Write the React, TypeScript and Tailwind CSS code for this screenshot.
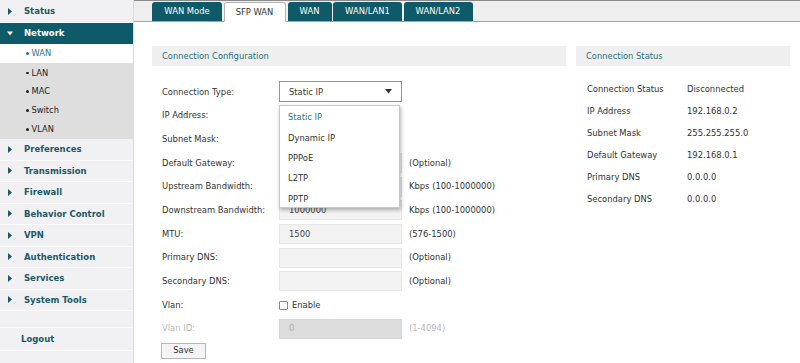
import React from 'react';

const font = { fontFamily: '"DejaVu Sans", Verdana, sans-serif' };

const menu = ['Preferences', 'Transmission', 'Firewall', 'Behavior Control', 'VPN', 'Authentication', 'Services', 'System Tools'];
const subs = ['LAN', 'MAC', 'Switch', 'VLAN'];
const tabs = ['WAN Mode', 'SFP WAN', 'WAN', 'WAN/LAN1', 'WAN/LAN2'];

const Arrow = ({ down = false }: { down?: boolean }) => (
  <svg width="6" height="7" viewBox="0 0 6 7" className="mr-[11px] ml-[7px]">
    {down ? <path d="M0 1.5h6L3 5.5z" fill="currentColor" /> : <path d="M1 0l4 3.5L1 7z" fill="currentColor" />}
  </svg>
);

const MenuItem = ({ label }: { label: string }) => (
  <div className="h-[21.5px] flex items-center border-b border-[#fbfbfc] text-[#1b5866] font-bold text-[8.5px]">
    <Arrow />
    {label}
  </div>
);

const Sidebar = () => (
  <div className="w-[134px] shrink-0 bg-[#f1f1f3] border-r border-[#dcdcdc] flex flex-col">
    <div className="h-[23px] flex items-center border-b border-[#fbfbfc] text-[#1b5866] font-bold text-[8.5px]">
      <Arrow />
      Status
    </div>
    <div className="h-[21px] flex items-center bg-[#0f5a69] text-white font-bold text-[8.5px]">
      <Arrow down />
      Network
    </div>
    <div className="h-[19px] flex items-center bg-white text-[#2a7585] text-[8.3px] pl-[26px]">
      <span className="w-[2.5px] h-[2.5px] rounded-full bg-[#2a7585] mr-[3px]" />
      WAN
    </div>
    <div className="bg-[#dedede] py-[0.5px]">
      {subs.map((s) => (
        <div key={s} className="h-[18.8px] flex items-center text-[#222] text-[8.3px] pl-[26px]">
          <span className="w-[2.5px] h-[2.5px] rounded-full bg-[#222] mr-[3px]" />
          {s}
        </div>
      ))}
    </div>
    {menu.map((m) => (
      <MenuItem key={m} label={m} />
    ))}
    <div className="h-[17px] border-b border-[#fbfbfc]" />
    <div className="h-[23px] flex items-center pl-[21px] border-b border-[#fbfbfc] text-[#1b5866] font-bold text-[8.5px]">
      Logout
    </div>
  </div>
);

const Row = ({ label, children, unit, dim = false }: { label: string; children?: React.ReactNode; unit?: string; dim?: boolean }) => (
  <div className="h-[23.7px] flex items-center">
    <div className={`w-[127px] shrink-0 pl-[10px] ${dim ? 'text-[#b8b8b8]' : 'text-[#333]'}`}>{label}</div>
    <div className="w-[123px] shrink-0">{children}</div>
    {unit && <div className={`ml-[7px] ${dim ? 'text-[#b8b8b8]' : 'text-[#333]'}`}>{unit}</div>}
  </div>
);

const Field = ({ value = '', dark = false }: { value?: string; dark?: boolean }) => (
  <div
    className={`h-[20px] flex items-center pl-[9px] border ${
      dark ? 'bg-[#dcdcdc] border-[#d6d6d6] text-[#b0b0b0]' : 'bg-[#f3f3f3] border-[#e6e6e6] text-[#444]'
    }`}
  >
    {value}
  </div>
);

const options = ['Static IP', 'Dynamic IP', 'PPPoE', 'L2TP', 'PPTP'];

export default function App() {
  return (
    <div className="w-[800px] h-[363px] flex overflow-hidden bg-white text-[8.4px]" style={font}>
      <Sidebar />
      <div className="flex-1 flex flex-col">
        <div className="h-[22px] bg-[#efefef] border-t-[1.5px] border-t-[#8a8a8a] border-b border-b-[#a3a3a3] flex items-end pl-[18px]">
          {tabs.map((t) =>
            t === 'SFP WAN' ? (
              <div
                key={t}
                className="h-[20px] w-[62px] mr-[2px] -mb-[1px] flex items-center justify-center bg-white border border-[#b5b5b5] border-b-white rounded-t-[3px] text-[#333]"
              >
                {t}
              </div>
            ) : (
              <div
                key={t}
                className={`h-[19px] ${t === 'WAN' ? 'w-[44px]' : t === 'WAN Mode' ? 'w-[70px]' : 'w-[69px]'} mr-[1.5px] flex items-center justify-center bg-[#0f5a69] rounded-t-[3px] text-white`}
              >
                {t}
              </div>
            )
          )}
        </div>
        <div className="flex pl-[18px] pt-[24px] gap-[10px]">
          <div className="w-[414px]">
            <div className="h-[20px] bg-[#efefef] flex items-center pl-[10px] text-[#2a7080]">Connection Configuration</div>
            <div className="mt-[14px]">
              <Row label="Connection Type:">
                <div className="relative">
                  <div className="h-[21px] flex items-center justify-between pl-[9px] pr-[9px] border border-[#7d9ca3] text-[#333] bg-white">
                    Static IP
                    <svg width="7" height="5" viewBox="0 0 7 5">
                      <path d="M0 0h7L3.5 4.5z" fill="#333" />
                    </svg>
                  </div>
                  <div className="absolute left-0 top-[24px] w-[121px] h-[103px] bg-white border border-[#c8c8c8] shadow-[1px_2px_4px_rgba(0,0,0,0.3)] z-10 pt-[1px]">
                    {options.map((o, i) => (
                      <div key={o} className={`h-[20.4px] flex items-center pl-[8px] ${i === 0 ? 'text-[#2a7585]' : 'text-[#333]'}`}>
                        {o}
                      </div>
                    ))}
                  </div>
                </div>
              </Row>
              <Row label="IP Address:" />
              <Row label="Subnet Mask:" />
              <Row label="Default Gateway:" unit="(Optional)">
                <Field />
              </Row>
              <Row label="Upstream Bandwidth:" unit="Kbps (100-1000000)">
                <Field value="1000000" />
              </Row>
              <Row label="Downstream Bandwidth:" unit="Kbps (100-1000000)">
                <Field value="1000000" />
              </Row>
              <Row label="MTU:" unit="(576-1500)">
                <Field value="1500" />
              </Row>
              <Row label="Primary DNS:" unit="(Optional)">
                <Field />
              </Row>
              <Row label="Secondary DNS:" unit="(Optional)">
                <Field />
              </Row>
              <Row label="Vlan:">
                <label className="flex items-center text-[#333]">
                  <span className="w-[9px] h-[9px] border border-[#888] bg-white rounded-[1px] mr-[4px]" />
                  Enable
                </label>
              </Row>
              <Row label="Vlan ID:" unit="(1-4094)" dim>
                <Field value="0" dark />
              </Row>
              <button className="ml-[9px] mt-[2px] h-[16px] w-[45px] bg-[#f4f4f4] border border-[#b8b8b8] text-[#333]">Save</button>
            </div>
          </div>
          <div className="w-[214px]">
            <div className="h-[20px] bg-[#efefef] flex items-center pl-[10px] text-[#2a7080]">Connection Status</div>
            <div className="mt-[12px] text-[#333]">
              {[
                ['Connection Status', 'Disconnected'],
                ['IP Address', '192.168.0.2'],
                ['Subnet Mask', '255.255.255.0'],
                ['Default Gateway', '192.168.0.1'],
                ['Primary DNS', '0.0.0.0'],
                ['Secondary DNS', '0.0.0.0'],
              ].map(([k, v]) => (
                <div key={k} className="h-[22px] flex items-center pl-[11px]">
                  <div className="w-[100px]">{k}</div>
                  <div>{v}</div>
                </div>
              ))}
            </div>
          </div>
        </div>
      </div>
    </div>
  );
}
